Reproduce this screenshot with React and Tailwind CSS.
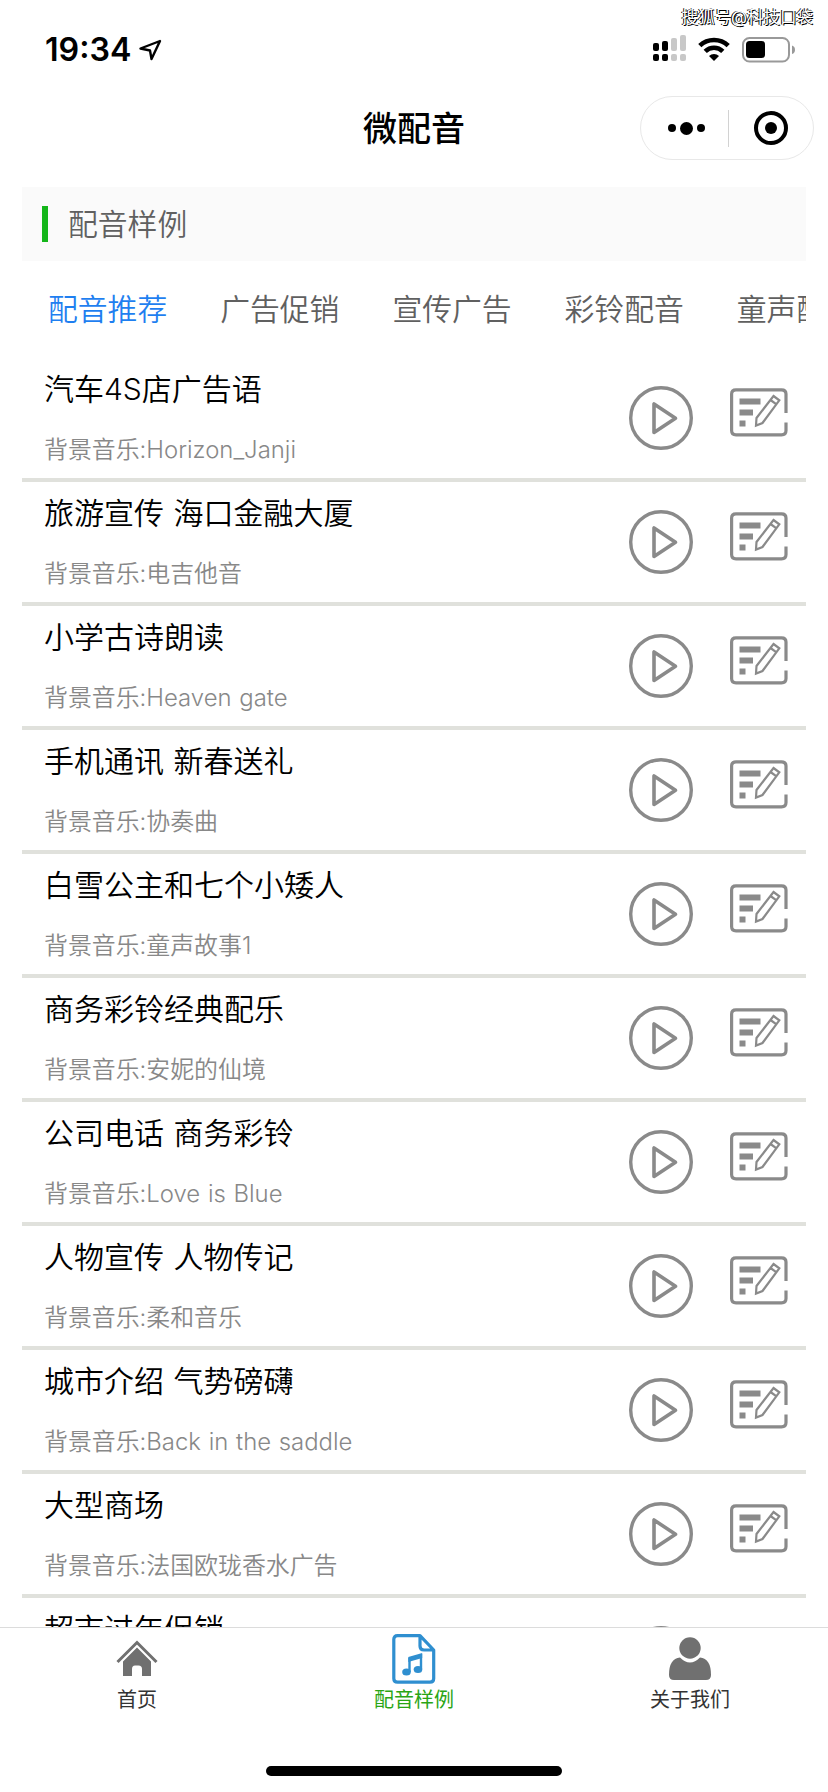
const tabs = ["配音推荐", "广告促销", "宣传广告", "彩铃配音", "童声配音"];

const samples = [
  { title: "汽车4S店广告语", music: "Horizon_Janji" },
  { title: "旅游宣传 海口金融大厦", music: "电吉他音" },
  { title: "小学古诗朗读", music: "Heaven gate" },
  { title: "手机通讯 新春送礼", music: "协奏曲" },
  { title: "白雪公主和七个小矮人", music: "童声故事1" },
  { title: "商务彩铃经典配乐", music: "安妮的仙境" },
  { title: "公司电话 商务彩铃", music: "Love is Blue" },
  { title: "人物宣传 人物传记", music: "柔和音乐" },
  { title: "城市介绍 气势磅礴", music: "Back in the saddle" },
  { title: "大型商场", music: "法国欧珑香水广告" },
  { title: "超市过年促销", music: "欢乐中国年" },
];

function PlayIcon() {
  return (
    <svg width="64" height="64" viewBox="0 0 64 64" fill="none" stroke="#8a8a8a">
      <circle cx="32" cy="32" r="30.3" strokeWidth="3.4" />
      <path d="M25 18 V46.5 L46.500 32.300 Z" strokeWidth="3.6" strokeLinejoin="round" />
    </svg>
  );
}

function EditIcon() {
  return (
    <svg width="58" height="49" viewBox="0 0 58 49" fill="none" stroke="#8a8a8a">
      <path d="M56 25 V6 Q56 1.8 51.5 1.8 H6 Q1.6 1.8 1.6 6 V42.5 Q1.6 46.8 6 46.8 H51.5 Q56 46.8 56 42.5 V34.5" strokeWidth="3.2" />
      <path d="M9.5 10.5h21v6h-21zM9.5 21.5h13.5v6h-13.5zM9.5 32.5h6v6h-6z" fill="#8a8a8a" stroke="none" />
      <path d="M43.500 8 L49.300 12.300 L32.500 35 L26 37.500 L26.500 30 Z M40.500 12 L46.500 16.300" strokeWidth="2.2" />
    </svg>
  );
}

function StatusBar() {
  return (
    <div className="flex h-[86px] shrink-0 items-start justify-between pt-[35px] pr-[32px] pl-[45px]">
      <div className="flex items-center gap-[7px]">
        <span className="font-[Inter,sans-serif] text-[32.2px] leading-[30px] font-semibold">19:34</span>
        <svg width="24" height="22" viewBox="0 0 24 22" fill="none" stroke="#000" strokeWidth="2.4" strokeLinejoin="round">
          <path d="M22 2 L2.5 9.5 L12 11.5 L13.5 20 Z" />
        </svg>
      </div>
      <div className="flex items-start">
        <svg width="34" height="27" viewBox="0 0 34 27">
          <g fill="#000">
            <rect x="0" y="8" width="6" height="8" rx="2" />
            <rect x="9" y="6" width="6" height="10" rx="2" />
            <rect x="0" y="19" width="6" height="7" rx="2" />
            <rect x="9" y="19" width="6" height="7" rx="2" />
          </g>
          <g fill="#c8c8c8">
            <rect x="18" y="3" width="6" height="13" rx="2" />
            <rect x="27" y="0" width="6" height="16" rx="2" />
            <rect x="18" y="19" width="6" height="7" rx="2" />
            <rect x="27" y="19" width="6" height="7" rx="2" />
          </g>
        </svg>
        <svg className="mt-[2px] ml-[11px]" width="32" height="24" viewBox="0 0 32 24" fill="none" stroke="#000" strokeWidth="4.6">
          <path d="M1.8 8.7 A20.5 20.5 0 0 1 30.2 8.7" />
          <path d="M7.2 14.4 A12.5 12.5 0 0 1 24.8 14.4" />
          <path d="M16 24 L11 19 A7.3 7.3 0 0 1 21 19 Z" fill="#000" stroke="none" />
        </svg>
        <svg className="mt-[1px] ml-[12px]" width="54" height="27" viewBox="0 0 54 27">
          <rect x="1" y="2" width="46" height="23.5" rx="6.5" fill="none" stroke="#999" strokeWidth="2" />
          <rect x="4" y="5" width="19" height="17" rx="3.5" />
          <path d="M50 9.5 Q53 10.5 53 13.7 Q53 17 50 18 Z" fill="#999" />
        </svg>
      </div>
    </div>
  );
}

function NavBar() {
  return (
    <div className="grid h-[101px] shrink-0 grid-cols-3 items-start">
      <div />
      <h1 className="pt-[18px] text-center text-[34px] leading-[50px] font-medium">微配音</h1>
      <div className="mt-[10px] mr-[14px] flex h-16 w-[174px] items-center justify-self-end rounded-full border border-[#e8e8e8]">
        <div className="flex w-[87px] items-center justify-center gap-1 pl-1">
          <i className="size-2 rounded-full bg-black" />
          <i className="size-[13px] rounded-full bg-black" />
          <i className="size-2 rounded-full bg-black" />
        </div>
        <div className="h-[37px] w-px bg-[#d2d2d2]" />
        <div className="flex grow items-center justify-center">
          <div className="flex size-[34px] items-center justify-center rounded-full border-4 border-black">
            <i className="size-3 rounded-full bg-black" />
          </div>
        </div>
      </div>
    </div>
  );
}

function SampleRow({ title, music }) {
  return (
    <li className="flex h-[124px] shrink-0 justify-between border-b-4 border-[#e0e1dc] pr-[18px] pl-[22px]">
      <div>
        <p className="mt-[9px] text-[30px] leading-[44px] [word-spacing:1px]">{title}</p>
        <p className="mt-[21px] text-[23.9px] leading-[36px] text-[#888] [word-spacing:1px]">背景音乐:{music}</p>
      </div>
      <div className="flex gap-[37px]">
        <button className="mt-[28px] self-start"><PlayIcon /></button>
        <button className="mt-[30px] self-start"><EditIcon /></button>
      </div>
    </li>
  );
}

function TabBar() {
  return (
    <nav className="grid h-[165px] shrink-0 grid-cols-3 border-t border-[#dcdcdc] bg-white text-[20px] leading-[28px] font-normal text-[#333]">
      <a className="flex flex-col items-center pr-[2px]">
        <svg className="mt-[5px]" width="42" height="53" viewBox="0 0 42 53" fill="#707070">
          <path d="M1.5 29 L21 9.5 L40.5 29" fill="none" stroke="#707070" strokeWidth="3" />
          <path d="M7 28.5 L21 14.5 L35 28.5 V43 H26 V36 Q26 32.5 22.5 32.5 H19 Q16 32.5 16 36 V43 H7 Z" />
        </svg>
        <span>首页</span>
      </a>
      <a className="flex flex-col items-center text-[#2aa515]">
        <svg className="mt-[5px]" width="44" height="53" viewBox="0 0 44 53" fill="none" stroke="#2f8fd0" strokeWidth="3.2">
          <path d="M28 2.6 H5.5 Q1.8 2.6 1.8 6.3 V45.5 Q1.8 49.2 5.5 49.2 H38 Q41.7 49.2 41.7 45.5 V17 L28 2.6 V13 Q28 17 32 17 H41.7" strokeLinejoin="round" />
          <path d="M17.5 39 V26 L29 22.5 V36" strokeWidth="2.4" />
          <path d="M16.3 24 L30.2 20 V25 L16.3 29 Z" fill="#2f8fd0" stroke="none" />
          <ellipse cx="14.5" cy="39" rx="4.3" ry="3.5" fill="#2f8fd0" stroke="none" />
          <ellipse cx="26" cy="36.5" rx="4.3" ry="3.5" fill="#2f8fd0" stroke="none" />
        </svg>
        <span>配音样例</span>
      </a>
      <a className="flex flex-col items-center">
        <svg className="mt-[5px]" width="42" height="53" viewBox="0 0 42 53" fill="#707070">
          <circle cx="21" cy="15" r="10.7" />
          <path d="M11 24.5 Q21 34.5 31 24.5 Q42 25.5 42 42 Q42 47 37 47 H5 Q0 47 0 42 Q0 25.5 11 24.5 Z" />
        </svg>
        <span>关于我们</span>
      </a>
    </nav>
  );
}

function App() {
  return (
    <div className="relative flex h-[1792px] w-[828px] flex-col overflow-hidden bg-white font-['Inter','Noto_Sans_CJK_SC',sans-serif] font-[350] text-black">
      <StatusBar />
      <NavBar />

      <main className="flex min-h-0 grow flex-col overflow-hidden pr-[22px] pl-[22px]">
        <div className="flex h-[74px] shrink-0 items-center gap-5 bg-[#fafafa] pl-5 text-[29.8px] text-[#606060]">
          <i className="h-9 w-[6px] bg-[#14b61a]" />
          <span>配音样例</span>
        </div>

        <div className="flex h-[97px] shrink-0 gap-[53px] overflow-hidden pt-[26px] pl-[26px] text-[29.8px] leading-[44px] whitespace-nowrap text-[#606060]">
          {tabs.map((tab, i) => (
            <span key={tab} className={i === 0 ? "text-[#1f7ff0]" : ""}>{tab}</span>
          ))}
        </div>

        <ul className="flex flex-col">
          {samples.map((item) => (
            <SampleRow key={item.title} {...item} />
          ))}
        </ul>
      </main>

      <TabBar />

      {/* home indicator */}
      <div className="absolute bottom-4 left-[266px] h-[10px] w-[296px] rounded-full bg-black" />
      {/* watermark */}
      <span className="absolute top-[5px] right-[15px] text-[16.5px] leading-[24px] font-normal text-white [text-shadow:1px_1px_0_#000,-1px_0_0_#000]">搜狐号@科技口袋</span>
    </div>
  );
}

export default App;
